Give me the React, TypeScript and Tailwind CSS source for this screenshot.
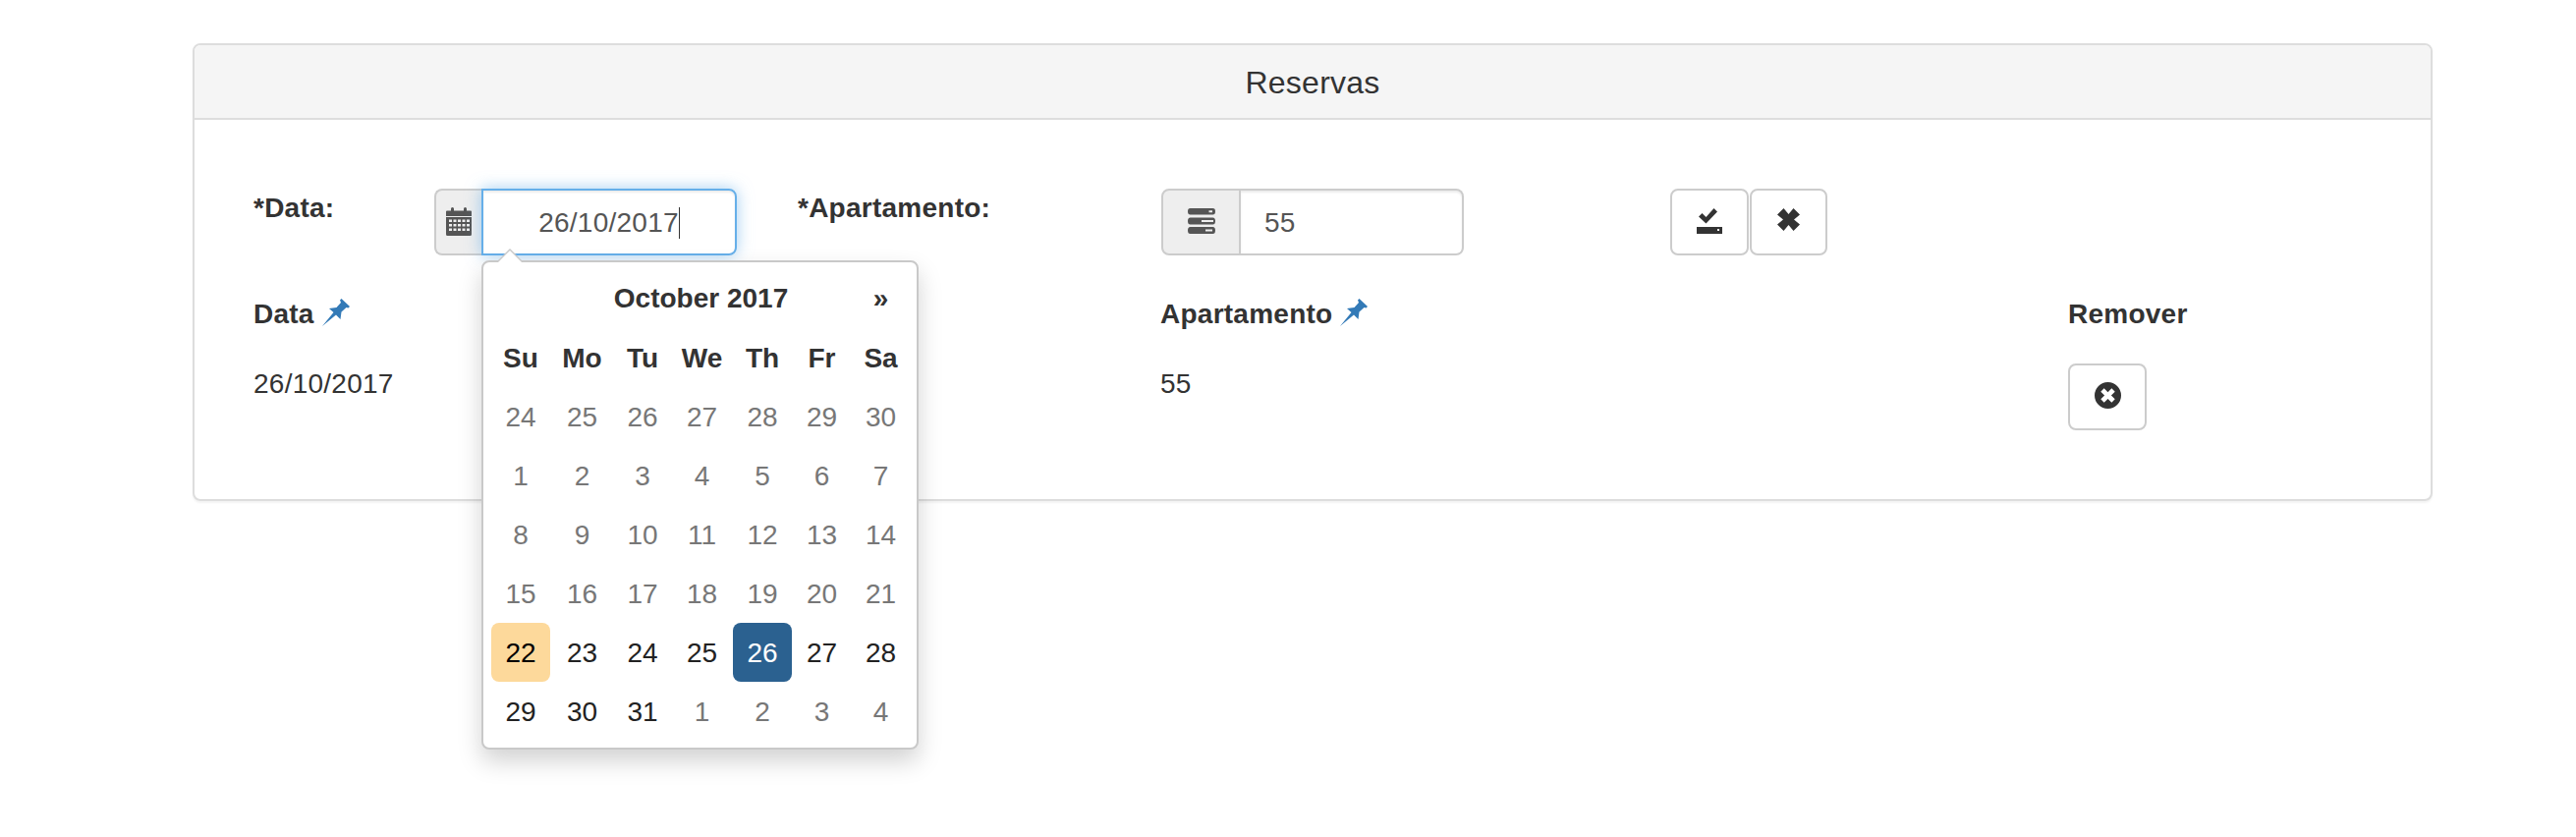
import React from 'react';

const weeks = [
  [['24', 0], ['25', 0], ['26', 0], ['27', 0], ['28', 0], ['29', 0], ['30', 0]],
  [['1', 0], ['2', 0], ['3', 0], ['4', 0], ['5', 0], ['6', 0], ['7', 0]],
  [['8', 0], ['9', 0], ['10', 0], ['11', 0], ['12', 0], ['13', 0], ['14', 0]],
  [['15', 0], ['16', 0], ['17', 0], ['18', 0], ['19', 0], ['20', 0], ['21', 0]],
  [['22', 2], ['23', 1], ['24', 1], ['25', 1], ['26', 3], ['27', 1], ['28', 1]],
  [['29', 1], ['30', 1], ['31', 1], ['1', 0], ['2', 0], ['3', 0], ['4', 0]],
] as [string, number][][];

const dayStyles = [
  'text-[#777]',
  'text-[#222]',
  'bg-[#fdd99b] text-black rounded-lg',
  'bg-[#2b6190] text-white rounded-lg',
];

const Pin = () => (
  <svg width="28" height="28" viewBox="0 0 28 28" className="mt-[-4px] shrink-0">
    <path d="M0 28L11.500 14L7 10L14.500 9L19 4L18 1.500L19.500 0L28 8L26.500 9.500L24.500 9L19.500 13.500L18.500 21L14 16.500Z" fill="#337ab7" />
  </svg>
);

const CalendarIcon = () => (
  <svg width="26" height="30" viewBox="0 0 26 30" className="mb-[3px]">
    <path d="M1 4.500H5V2.500Q5 1 6.500 1Q8 1 8 2.500V4.500H18V2.500Q18 1 19.500 1Q21 1 21 2.500V4.500H25Q26 4.500 26 5.500V10H0V5.500Q0 4.500 1 4.500Z" fill="#555" />
    <path fillRule="evenodd" d="M0 11H26V28.500Q26 30 24.500 30H1.500Q0 30 0 28.500ZM3 13.500V16H6V13.500ZM7.500 13.500V16H10.500V13.500ZM12 13.500V16H15V13.500ZM16.500 13.500V16H19.500V13.500ZM21 13.500V16H24V13.500ZM3 18V20.500H6V18ZM7.500 18V20.500H10.500V18ZM12 18V20.500H15V18ZM16.500 18V20.500H19.500V18ZM21 18V20.500H24V18ZM3 22.500V25H6V22.500ZM7.500 22.500V25H10.500V22.500ZM12 22.500V25H15V22.500ZM16.500 22.500V25H19.500V22.500ZM21 22.500V25H24V22.500Z" fill="#555" />
  </svg>
);

const TasksIcon = () => (
  <svg width="28" height="26" viewBox="0 0 28 26" className="mb-[2px]">
    <path fillRule="evenodd" d="M2.500 0H25.500Q28 0 28 3.250Q28 6.500 25.500 6.500H2.500Q0 6.500 0 3.250Q0 0 2.500 0ZM21.500 2.200V4.300H25V2.200Z" fill="#555" />
    <path fillRule="evenodd" d="M2.500 9.500H25.500Q28 9.500 28 13Q28 16.500 25.500 16.500H2.500Q0 16.500 0 13Q0 9.500 2.500 9.500ZM14 11.900V14.100H26V11.900Z" fill="#555" />
    <path fillRule="evenodd" d="M2.500 19H25.500Q28 19 28 22.500Q28 26 25.500 26H2.500Q0 26 0 22.500Q0 19 2.500 19ZM18 21.400V23.600H25V21.400Z" fill="#555" />
  </svg>
);

const SaveIcon = () => (
  <svg width="26" height="26" viewBox="0 0 26 26" className="mb-[2px]">
    <path d="M2 8.500L5.500 5L9.500 9L17.500 0L21 3.500L9.500 15.500Z" fill="#333" />
    <path fillRule="evenodd" d="M0 19H26V26H0ZM21 21V23H23V21Z" fill="#333" />
  </svg>
);

const CrossIcon = () => (
  <svg width="23" height="23" viewBox="0 0 23 23" className="mb-[5px]">
    <path d="M6.500 0L11.500 6L16.500 0L23 6.500L17 11.500L23 16.500L16.500 23L11.500 17L6.500 23L0 16.500L6 11.500L0 6.500Z" fill="#333" />
  </svg>
);

const RemoveCircleIcon = () => (
  <svg width="27" height="27" viewBox="0 0 28 28" className="mb-[4px]">
    <path fillRule="evenodd" d="M14 0A14 14 0 1 1 14 28A14 14 0 1 1 14 0ZM10 6.500L6.500 10L10.500 14L6.500 18L10 21.500L14 17.500L18 21.500L21.500 18L17.500 14L21.500 10L18 6.500L14 10.500Z" fill="#333" />
  </svg>
);

const DatePopup = () => (
  <div className="absolute left-0 top-[73px] z-10 w-[445px] rounded-lg border-2 border-[#c9c9c9] bg-white pt-[7px] pb-[7px] pl-[8px] tracking-normal shadow-[0_12px_24px_rgba(0,0,0,0.175)]">
    <div className="absolute left-[13px] top-[-14px] h-0 w-0 border-x-[14px] border-b-[14px] border-x-transparent border-b-[#c9c9c9]" />
    <div className="absolute left-[15px] top-[-12px] h-0 w-0 border-x-[12px] border-b-[12px] border-x-transparent border-b-white" />
    <div className="grid grid-cols-[60px_65px_58px_63px_60px_61px_59px] text-center text-[28px]">
      <div className="h-[60px]" />
      <div className="col-span-5 flex h-[60px] items-center justify-center font-bold text-[#333]">October 2017</div>
      <div className="flex h-[60px] items-center justify-center font-bold text-[#333]">»</div>
      {['Su', 'Mo', 'Tu', 'We', 'Th', 'Fr', 'Sa'].map((d) => (
        <div key={d} className="flex h-[60px] items-center justify-center pt-[1px] font-bold text-[#333]">{d}</div>
      ))}
      {weeks.flat().map(([label, kind], i) => (
        <div key={i} className={`flex h-[60px] items-center justify-center pt-[1px] ${dayStyles[kind]}`}>{label}</div>
      ))}
    </div>
  </div>
);

export default function App() {
  return (
    <div className="min-h-[852px] bg-white pt-[44px] pl-[196px] pr-[146px] font-['Liberation_Sans',Arial,sans-serif] text-[28px] leading-[40px] tracking-[0.25px] text-[#333]">
      <div className="rounded-lg border-2 border-[#ddd] bg-white shadow-[0_2px_2px_rgba(0,0,0,0.05)]">
        <div className="flex h-[76px] items-center justify-center rounded-t-md border-b-2 border-[#ddd] bg-[#f5f5f5] pt-[2px] text-[32px]">
          Reservas
        </div>
        <div className="pt-[70px] pr-[60px] pb-[70px] pl-[60px]">
          <div className="flex items-start">
            <label className="w-[184px] font-bold">*Data:</label>
            <div className="flex h-[68px]">
              <div className="flex w-[48px] items-center justify-center rounded-l-lg border-y-2 border-l-2 border-[#ccc] bg-[#eee]">
                <CalendarIcon />
              </div>
              <div className="relative">
                <div className="flex h-[68px] w-[260px] items-center justify-center rounded-r-lg border-2 border-[#66afe9] pt-[1px] text-[#555] shadow-[inset_0_2px_2px_rgba(0,0,0,0.075),0_0_16px_rgba(102,175,233,0.6)]">
                  26/10/2017
                  <span className="h-[32px] w-[1px] bg-[#333]" />
                </div>
                <DatePopup />
              </div>
            </div>
            <label className="ml-[62px] w-[370px] font-bold">*Apartamento:</label>
            <div className="flex h-[68px] w-[308px]">
              <div className="flex w-[81px] items-center justify-center rounded-l-lg border-2 border-[#ccc] bg-[#eee]">
                <TasksIcon />
              </div>
              <div className="flex flex-1 items-center rounded-r-lg border-y-2 border-r-2 border-[#ccc] pt-[1px] pl-[24px] text-[#555] shadow-[inset_0_2px_2px_rgba(0,0,0,0.075)]">
                55
              </div>
            </div>
            <div className="ml-[210px] flex gap-[1px]">
              <button className="flex h-[68px] w-[80px] items-center justify-center rounded-lg border-2 border-[#ccc] bg-white">
                <SaveIcon />
              </button>
              <button className="flex h-[68px] w-[79px] items-center justify-center rounded-lg border-2 border-[#ccc] bg-white">
                <CrossIcon />
              </button>
            </div>
          </div>

          <div className="mt-[40px] grid grid-cols-[923px_924px_1fr] gap-y-[30px]">
            <div className="flex items-center gap-[8px] font-bold">Data <Pin /></div>
            <div className="flex items-center gap-[8px] font-bold">Apartamento <Pin /></div>
            <div className="font-bold">Remover</div>
            <div className="pt-[1px]">26/10/2017</div>
            <div className="pt-[1px]">55</div>
            <div>
              <button className="flex h-[68px] w-[80px] items-center justify-center rounded-lg border-2 border-[#ccc] bg-white">
                <RemoveCircleIcon />
              </button>
            </div>
          </div>
        </div>
      </div>
    </div>
  );
}
